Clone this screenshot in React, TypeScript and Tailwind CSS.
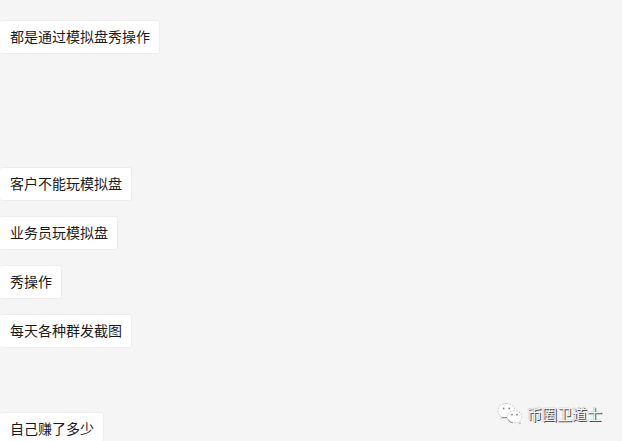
import React from "react";

type Row = { text: string; before: string };

const messages: Row[] = [
  { text: "都是通过模拟盘秀操作", before: "mt-5" },
  { text: "客户不能玩模拟盘", before: "mt-[113px]" },
  { text: "业务员玩模拟盘", before: "mt-[15px]" },
  { text: "秀操作", before: "mt-[15px]" },
  { text: "每天各种群发截图", before: "mt-[15px]" },
  { text: "自己赚了多少", before: "mt-16" },
];

function WeChatMark() {
  return (
    <svg width="26" height="24" viewBox="0 0 26 24" aria-hidden="true">
      <g stroke="#b4b4b4" strokeWidth="0.7" strokeDasharray="1.6 1.4">
        <path
          fill="#fdfdfd"
          d="M9.500 1.500C4.700 1.500 1 4.700 1 8.700c0 2.300 1.200 4.200 3.100 5.500l-.8 2.600 3-1.500c1 .3 2.100.5 3.200.5 4.700 0 8.500-3.200 8.500-7.100s-3.800-7.200-8.500-7.200z"
        />
        <path
          fill="#fdfdfd"
          d="M17.500 8.500c-4.100 0-7.300 2.700-7.300 6.100s3.200 6.200 7.300 6.200c.9 0 1.800-.1 2.600-.4l2.500 1.300-.6-2.200c1.700-1.100 2.800-2.900 2.800-4.900 0-3.400-3.300-6.100-7.300-6.100z"
        />
      </g>
      <path d="M4.500 15.700h5.500M11 17.500c.9 1.600 2.500 2.700 4.500 3.200M22.500 21.700l1-.6" fill="none" stroke="#777777" strokeWidth="0.9" />
      <g fill="#8a8a8a">
        <circle cx="6.600" cy="6.500" r="0.900" />
        <circle cx="12.300" cy="6.500" r="0.900" />
        <circle cx="15" cy="12.700" r="0.900" />
        <circle cx="20" cy="12.700" r="0.900" />
      </g>
    </svg>
  );
}

export default function App() {
  return (
    <main className="relative h-screen overflow-hidden bg-[#f5f5f5] font-['Noto_Sans_CJK_SC',sans-serif]">
      <ul className="flex flex-col items-start">
        {messages.map((m) => (
          <li
            key={m.text}
            className={`${m.before} shrink-0 rounded-[3px] border border-l-0 border-[#ededed] bg-white pt-[5px] pr-[9px] pb-[7px] pl-2.5 text-sm leading-5 whitespace-nowrap text-[#1a1a1a]`}
          >
            {m.text}
          </li>
        ))}
      </ul>
      <div className="absolute right-5 bottom-[15px] flex items-center gap-1">
        <WeChatMark />
        <span className="text-[15px] leading-6 whitespace-nowrap text-[#f5f5f5] [text-shadow:1px_1px_0_#505050,0_0_1px_#707070]">
          币圈卫道士
        </span>
      </div>
    </main>
  );
}
